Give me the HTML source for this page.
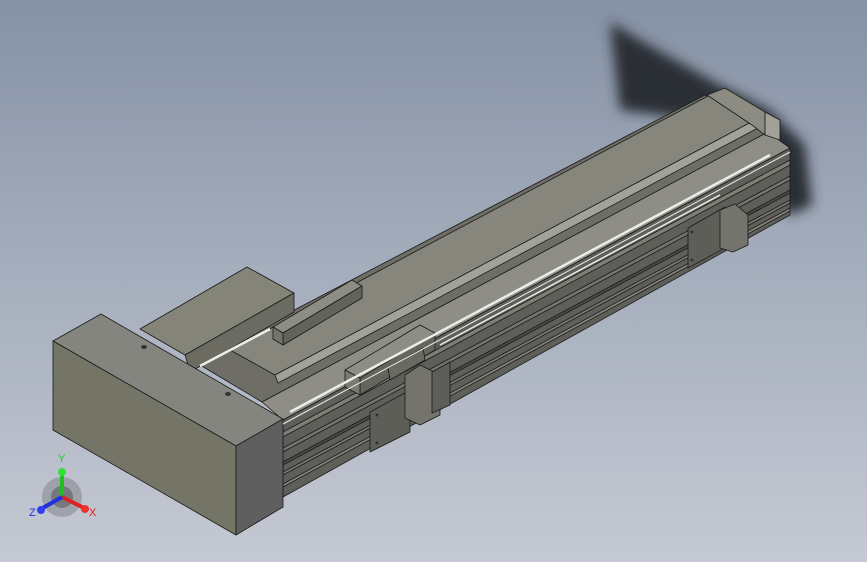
<!DOCTYPE html>
<html><head><style>
html,body{margin:0;padding:0;width:867px;height:562px;overflow:hidden;background:linear-gradient(180deg,#8591a5 0%,#a3acbb 45%,#c5c9d3 100%);}
svg{position:absolute;left:0;top:0}
</style></head><body>
<svg width="867" height="562" viewBox="0 0 867 562">
<defs>
<filter id="b" x="-30%" y="-30%" width="160%" height="160%"><feGaussianBlur stdDeviation="6"/></filter>
</defs>
<polygon points="610,22 640,40 720,85 770,110 805,145 812,205 790,215 700,120 620,110" fill="#2a2e36" filter="url(#b)"/>
<g stroke="#1a1a1a" stroke-width="0.8" stroke-linejoin="round">
<!-- base channel behind -->
<polygon points="195,362 705,95 768,132 262,402" fill="#6e6e66"/>
<!-- top cover (narrower) -->
<polygon points="230,350 710,95 755,120 275,375" fill="#86867d"/>
<polygon points="275,375 755,120 758,128 278,383" fill="#a2a298"/>
<!-- front upper face -->
<polygon points="262,402 768,132 790,148 283,420" fill="#8e8e86"/>
<!-- front side -->
<polygon points="283,420 790,148 790,215 283,497" fill="#5f5f59"/>
<polygon points="283,432 790,160 790,165 283,437" fill="#7e7e76"/>
<polygon points="283,448 790,176 790,180 283,452" fill="#74746c"/>
<polygon points="283,462 790,190 790,193 283,465" fill="#4c4c47"/>
<polygon points="283,472 790,200 790,203 283,475" fill="#7a7a72"/>
<polygon points="283,484 790,208 790,211 283,487" fill="#85857d"/>
<!-- end cap far -->
<polygon points="707,95 725,88 765,112 765,135 752,125" fill="#8c8c83"/>
<polygon points="765,112 780,120 780,140 765,135" fill="#a1a198"/>
<!-- back motor block -->
<polygon points="140,329 247,267 294,293 185,355" fill="#848479"/>
<polygon points="185,355 294,293 294,312 190,372" fill="#6b6b62"/>
<!-- carriage bar -->
<polygon points="273,327 352,280 362,286 283,333" fill="#8d8d84"/>
<polygon points="283,333 362,286 362,298 283,345" fill="#636359"/>
<polygon points="273,327 283,333 283,345 273,339" fill="#74746b"/>
<!-- carriage block -->
<polygon points="345,370 420,325 435,333 360,378" fill="#8e8e85"/>
<polygon points="360,378 435,333 435,350 360,395" fill="#65655d"/>
<polygon points="345,370 360,378 360,395 345,387" fill="#7a7a71"/>
<!-- brackets -->
<polygon points="370,412 410,390 410,432 370,452" fill="#5e5e58"/>
<polygon points="388,368 423,348 425,360 390,380" fill="#6a6a62"/>
<polygon points="405,375 420,365 440,375 440,415 420,425 405,418" fill="#74746c"/>
<polygon points="432,372 450,362 450,405 432,413" fill="#5e5e58"/>
<polygon points="688,228 725,207 725,248 688,268" fill="#5e5e58"/>
<polygon points="720,210 735,204 748,215 748,245 733,252 720,248" fill="#74746c"/>
<!-- motor box -->
<polygon points="53,341 101,314 283,419 236,446" fill="#858580"/>
<polygon points="53,341 236,446 236,535 53,430" fill="#747467"/>
<polygon points="236,446 283,419 283,507 236,535" fill="#5f5f5f"/>
</g>
<g stroke="#ececE8" stroke-width="2.5" fill="none">
<line x1="200" y1="366" x2="270" y2="329"/>
<line x1="290" y1="412" x2="770" y2="155"/>
<line x1="440" y1="345" x2="720" y2="195" stroke-width="1.5"/>
<line x1="283" y1="424" x2="790" y2="152" stroke-width="1"/>
</g>
<g fill="#333"><ellipse cx="144" cy="347" rx="3" ry="2"/><ellipse cx="228" cy="394" rx="3" ry="2"/>
<circle cx="377" cy="415" r="1.5"/><circle cx="377" cy="443" r="1.5"/><circle cx="692" cy="232" r="1.5"/><circle cx="692" cy="260" r="1.5"/></g>
<circle cx="62" cy="497" r="20" fill="#7d7f86" opacity="0.5"/>
<circle cx="62" cy="497" r="11" fill="#5c5e64" opacity="0.6"/>
<line x1="62" y1="497" x2="62" y2="473" stroke="#1fbf1f" stroke-width="4"/>
<circle cx="62" cy="472" r="4" fill="#35e035"/>
<line x1="62" y1="497" x2="84" y2="508" stroke="#dd2020" stroke-width="4"/>
<circle cx="85" cy="509" r="4" fill="#ee3030"/>
<line x1="62" y1="497" x2="41" y2="509" stroke="#2030dd" stroke-width="4"/>
<circle cx="41" cy="510" r="4" fill="#3040ee"/>
<g font-family="Liberation Sans, sans-serif" font-size="11">
<text x="58" y="462" fill="#20d020">Y</text>
<text x="89" y="516" fill="#e02020">X</text>
<text x="29" y="516" fill="#2030e0">Z</text>
</g>
</svg>
</body></html>
